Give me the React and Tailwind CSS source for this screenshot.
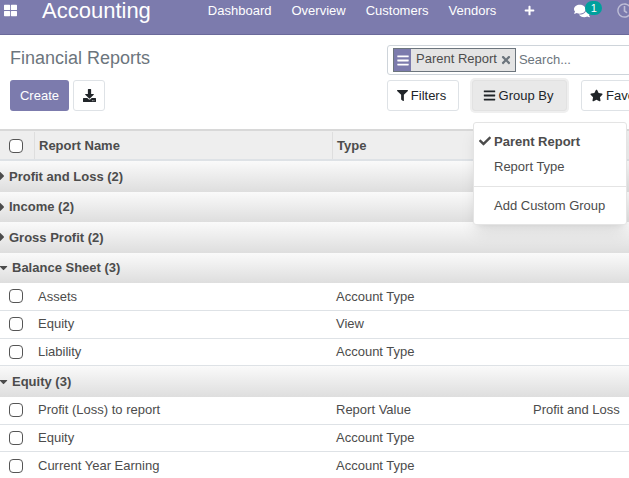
import React from "react";
import {
  FaThLarge,
  FaPlus,
  FaComments,
  FaRegClock,
  FaBars,
  FaTimes,
  FaFilter,
  FaStar,
  FaCheck,
  FaCaretRight,
  FaCaretDown,
  FaDownload,
} from "react-icons/fa";

const Checkbox = () => (
  <span className="block w-[14px] h-[14px] rounded-[4px] border-[1.5px] border-[#555555] bg-white"></span>
);

const GroupRow = ({ label, open }) => (
  <div className="h-[30.5px] flex items-center bg-gradient-to-b from-[#fafafa] to-[#dedede] font-bold text-[13px] text-[#4c4c4c]">
    {open ? (
      <FaCaretDown className="w-[13px] h-[13px] shrink-0 -ml-[3px] text-[#4c4c4c]" />
    ) : (
      <FaCaretRight className="w-[12px] h-[14px] shrink-0 -ml-[4px] text-[#4c4c4c]" />
    )}
    <span className={open ? "ml-[2px]" : "ml-[1px]"}>{label}</span>
  </div>
);

const DataRow = ({ name, type, extra }) => (
  <div className="h-[27.75px] flex items-center bg-white border-b border-[#dee2e6] text-[13px] text-[#4c4c4c]">
    <div className="w-[38px] pl-[9px] shrink-0">
      <Checkbox />
    </div>
    <div className="w-[298px] shrink-0">{name}</div>
    <div className="w-[197px] shrink-0">{type}</div>
    <div>{extra}</div>
  </div>
);

const App = () => {
  return (
    <div
      className="relative w-[629px] h-[478px] overflow-hidden bg-white"
      style={{ fontFamily: "'Liberation Sans', Arial, sans-serif" }}
    >
      {/* Navbar */}
      <header className="h-[35px] bg-[#7c7bad] border-b border-[#6b6a9a] flex items-center pb-[13px] text-white">
        <FaThLarge className="w-[13px] h-[13px] ml-[4px] shrink-0" />
        <span className="ml-[25px] text-[22px] leading-[20px] whitespace-nowrap">Accounting</span>
        <nav className="flex items-center gap-[20px] ml-[57px] text-[13px] font-medium whitespace-nowrap">
          <span>Dashboard</span>
          <span>Overview</span>
          <span>Customers</span>
          <span>Vendors</span>
        </nav>
        <FaPlus className="w-[11px] h-[11px] ml-[28px] shrink-0" />
        <div className="relative ml-[39px] shrink-0">
          <FaComments className="w-[16px] h-[16px]" />
          <span className="absolute -top-[2px] left-[11px] w-[17px] h-[14px] rounded-full bg-[#00a09d] text-[11px] leading-[14px] text-center">
            1
          </span>
        </div>
        <FaRegClock className="w-[15px] h-[15px] ml-[27px] shrink-0 opacity-50" />
      </header>

      {/* Control panel */}
      <div className="h-[96px] flex border-b-2 border-[#d8d8d8]">
        <div className="w-[387px] shrink-0 pl-[10px]">
          <h1 className="mt-[11px] text-[18px] leading-[24px] text-[#6c757d]">Financial Reports</h1>
          <div className="mt-[10px] flex gap-[4px]">
            <button className="w-[59px] h-[31px] rounded-[3px] bg-[#7c7bad] text-white text-[13px]">
              Create
            </button>
            <button className="w-[32px] h-[31px] rounded-[3px] bg-white border border-[#dee2e6] flex items-center justify-center">
              <FaDownload className="w-[13px] h-[13px] text-[#212529]" />
            </button>
          </div>
        </div>
        <div className="flex-1 min-w-0">
          <div className="mt-[10px] w-[300px] h-[30px] rounded-[3px] border border-[#ced4da] flex items-center pl-[5px] text-[13px] text-[#4c4c4c]">
            <div className="h-[24px] flex border border-[#6c757d] bg-[#e4e4e4] shrink-0">
              <span className="w-[17px] bg-[#7c7bad] flex items-center justify-center">
                <FaBars className="w-[12px] h-[13px] text-white" />
              </span>
              <span className="pl-[5px] pr-[4px] leading-[20px] whitespace-nowrap">Parent Report</span>
              <FaTimes className="w-[10px] h-[12px] mt-[5px] mr-[4px] text-[#6c757d]" />
            </div>
            <span className="ml-[3px] text-[#6c757d]">Search...</span>
          </div>
          <div className="mt-[5px] flex items-center text-[13px] text-[#212529]">
            <button className="w-[72px] h-[31px] pr-[3px] rounded-[3px] border border-[#dee2e6] flex items-center justify-center gap-[3px] shrink-0">
              <FaFilter className="w-[11px] h-[11px]" />
              Filters
            </button>
            <button className="ml-[13px] w-[95px] h-[31px] pr-[3px] rounded-[3px] bg-[#e9e9e9] ring-2 ring-[#efefef] border border-[#e2e2e2] flex items-center justify-center gap-[3px] shrink-0">
              <FaBars className="w-[13px] h-[13px]" />
              Group By
            </button>
            <button className="ml-[14px] w-[90px] h-[31px] rounded-[3px] border border-[#dee2e6] flex items-center pl-[8px] gap-[3px] shrink-0 whitespace-nowrap">
              <FaStar className="w-[13px] h-[13px]" />
              Favorites
            </button>
          </div>
        </div>
      </div>

      {/* Table header */}
      <div className="h-[30px] pt-[1px] flex items-center bg-[#eeeeee] border-b-2 border-[#dee2e6] font-bold text-[13px] text-[#4c4c4c]">
        <div className="w-[35px] h-full pl-[9px] flex items-center border-r border-[#dedede] shrink-0">
          <Checkbox />
        </div>
        <div className="w-[298px] h-full pl-[4px] flex items-center border-r border-[#dedede] shrink-0">
          Report Name
        </div>
        <div className="pl-[4px]">Type</div>
      </div>

      {/* Table body */}
      <div>
        <GroupRow label="Profit and Loss (2)" />
        <GroupRow label="Income (2)" />
        <GroupRow label="Gross Profit (2)" />
        <GroupRow label="Balance Sheet (3)" open />
        <DataRow name="Assets" type="Account Type" />
        <DataRow name="Equity" type="View" />
        <DataRow name="Liability" type="Account Type" />
        <GroupRow label="Equity (3)" open />
        <DataRow name="Profit (Loss) to report" type="Report Value" extra="Profit and Loss" />
        <DataRow name="Equity" type="Account Type" />
        <DataRow name="Current Year Earning" type="Account Type" />
      </div>

      {/* Group By dropdown */}
      <div className="absolute left-[473px] top-[122px] w-[154px] h-[103px] bg-white rounded-[3px] border border-[#e4e4e4] shadow-lg text-[13px] text-[#4c4c4c]">
        <div className="relative h-[25px] mt-[6px] pl-[20px] flex items-center font-bold">
          <FaCheck className="absolute left-[5px] top-[6px] w-[12px] h-[12px]" />
          Parent Report
        </div>
        <div className="h-[25px] pl-[20px] flex items-center">Report Type</div>
        <div className="mt-[7px] border-t border-[#e4e4e4]"></div>
        <div className="h-[25px] mt-[6px] pl-[20px] flex items-center">Add Custom Group</div>
      </div>
    </div>
  );
};

export default App;
